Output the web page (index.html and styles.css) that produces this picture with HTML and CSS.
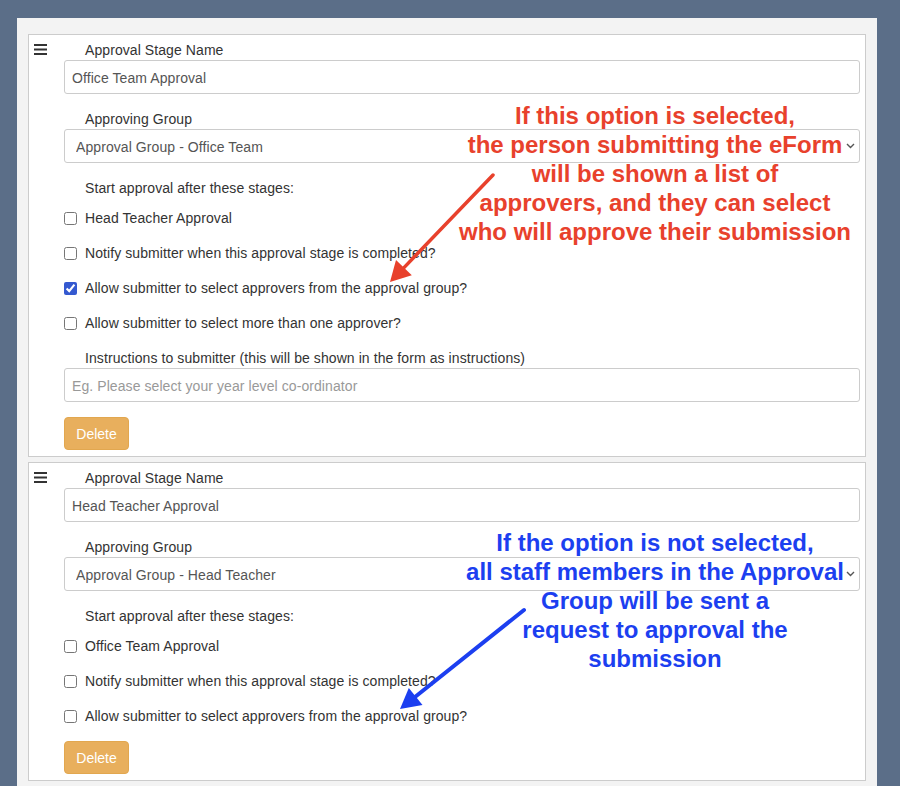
FILE: index.html
```html
<!DOCTYPE html>
<html lang="en">
<head>
  <meta charset="UTF-8">
  <meta name="viewport" content="width=device-width, initial-scale=1.0">
  <title>Approval Stages</title>
  <link rel="stylesheet" href="styles.css">
</head>
<body>
  <div class="panel">

    <!-- Stage 1 -->
    <div class="stage">
      <div class="handle">
        <svg width="13" height="11" viewBox="0 0 13 11"><path d="M0 1h13M0 5.5h13M0 10h13" stroke="#333" stroke-width="1.8"/></svg>
      </div>
      <div class="stage-body">
        <label class="field-label">Approval Stage Name</label>
        <input class="text-input" type="text" value="Office Team Approval">

        <label class="field-label">Approving Group</label>
        <div class="select-wrap">
          <select class="select-input">
            <option>Approval Group - Office Team</option>
          </select>
          <svg class="chevron" width="9" height="6" viewBox="0 0 9 6"><path d="M1 1l3.5 3.5L8 1" fill="none" stroke="#555" stroke-width="1.4"/></svg>
        </div>

        <label class="field-label">Start approval after these stages:</label>
        <div class="check-row first"><input type="checkbox"><span>Head Teacher Approval</span></div>
        <div class="check-row"><input type="checkbox"><span>Notify submitter when this approval stage is completed?</span></div>
        <div class="check-row"><input type="checkbox" checked><span>Allow submitter to select approvers from the approval group?</span></div>
        <div class="check-row"><input type="checkbox"><span>Allow submitter to select more than one approver?</span></div>

        <label class="field-label">Instructions to submitter (this will be shown in the form as instructions)</label>
        <input class="text-input" type="text" placeholder="Eg. Please select your year level co-ordinator">

        <button class="delete-btn">Delete</button>
      </div>
    </div>

    <!-- Stage 2 -->
    <div class="stage">
      <div class="handle">
        <svg width="13" height="11" viewBox="0 0 13 11"><path d="M0 1h13M0 5.5h13M0 10h13" stroke="#333" stroke-width="1.8"/></svg>
      </div>
      <div class="stage-body">
        <label class="field-label">Approval Stage Name</label>
        <input class="text-input" type="text" value="Head Teacher Approval">

        <label class="field-label">Approving Group</label>
        <div class="select-wrap">
          <select class="select-input">
            <option>Approval Group - Head Teacher</option>
          </select>
          <svg class="chevron" width="9" height="6" viewBox="0 0 9 6"><path d="M1 1l3.5 3.5L8 1" fill="none" stroke="#555" stroke-width="1.4"/></svg>
        </div>

        <label class="field-label">Start approval after these stages:</label>
        <div class="check-row first"><input type="checkbox"><span>Office Team Approval</span></div>
        <div class="check-row"><input type="checkbox"><span>Notify submitter when this approval stage is completed?</span></div>
        <div class="check-row"><input type="checkbox"><span>Allow submitter to select approvers from the approval group?</span></div>

        <button class="delete-btn">Delete</button>
      </div>
    </div>

    <!-- annotations drawn on top of the screenshot -->
    <div class="note note-red">
      If this option is selected,<br>
      the person submitting the eForm<br>
      will be shown a list of<br>
      approvers, and they can select<br>
      who will approve their submission
    </div>
    <div class="note note-blue">
      If the option is not selected,<br>
      all staff members in the Approval<br>
      Group will be sent a<br>
      request to approval the<br>
      submission
    </div>
    <svg class="arrows" width="860" height="768" viewBox="0 0 860 768">
      <line x1="476" y1="157" x2="387" y2="249.6" stroke="#e8412c" stroke-width="3.5" stroke-linecap="round"/>
      <polygon points="373,264 394.8,257.2 379,242" fill="#e8412c"/>
      <line x1="507" y1="592" x2="398.6" y2="678.5" stroke="#1c3ff0" stroke-width="4" stroke-linecap="round"/>
      <polygon points="383,691 405.5,687.1 391.8,669.9" fill="#1c3ff0"/>
    </svg>
  </div>
</body>
</html>
```

FILE: styles.css
```css
body {
  margin: 0;
  background-color: #5b6e88;
  font-family: "Liberation Sans", Arial, Helvetica, sans-serif;
  font-size: 14px;
  letter-spacing: 0.08px;
  color: #333;
}

.panel {
  position: relative;
  width: 838px;
  margin: 18px 0 0 17px;
  padding: 16px 11px 10px;
  background-color: #f3f3f3;
  min-height: 742px;
}

.stage {
  display: flex;
  background-color: #fff;
  border: 1px solid #cccccc;
  padding: 5px 5px 6px 0;
  margin-bottom: 5px;
}

.handle {
  width: 30px;
  padding-left: 5px;
  padding-top: 4px;
}

.handle svg {
  display: block;
}

.stage-body {
  flex: 1;
  display: flex;
  flex-direction: column;
  align-items: flex-start;
}

.field-label {
  display: block;
  line-height: 20px;
  padding-left: 21px;
  margin-top: 15px;
}

.stage-body .field-label:first-child {
  margin-top: 0;
}

.text-input,
.select-input {
  width: 100%;
  height: 34px;
  box-sizing: border-box;
  border: 1px solid #cccccc;
  border-radius: 3px;
  background-color: #fff;
  font-family: inherit;
  font-size: 14px;
  letter-spacing: 0.08px;
  color: #555;
  padding: 1px 7px 0;
  margin: 0;
}

.text-input::placeholder {
  color: #999;
}

.select-wrap {
  position: relative;
  width: 100%;
}

.select-input {
  display: block;
  appearance: none;
  -webkit-appearance: none;
  padding-left: 11px;
}

.chevron {
  position: absolute;
  right: 5px;
  top: 14px;
}

.check-row {
  display: flex;
  align-items: center;
  height: 20px;
  margin-top: 15px;
}

.check-row.first {
  margin-top: 10px;
}

.check-row input {
  width: 13px;
  height: 13px;
  margin: 0 8px 0 0;
  accent-color: #3459d0;
}

.delete-btn {
  margin-top: 15px;
  width: 65px;
  height: 33px;
  background-color: #e8af5d;
  border: 1px solid #e2a74f;
  border-radius: 4px;
  color: #fff;
  font-family: inherit;
  font-size: 14px;
  cursor: pointer;
}

.note {
  position: absolute;
  left: 403px;
  width: 470px;
  text-align: center;
  font-size: 24px;
  font-weight: bold;
  letter-spacing: 0;
  line-height: 29px;
}

.note-red {
  top: 83px;
  color: #e8412c;
}

.note-blue {
  top: 510px;
  color: #1c3ff0;
}

.arrows {
  position: absolute;
  left: 0;
  top: 0;
  pointer-events: none;
}
```
